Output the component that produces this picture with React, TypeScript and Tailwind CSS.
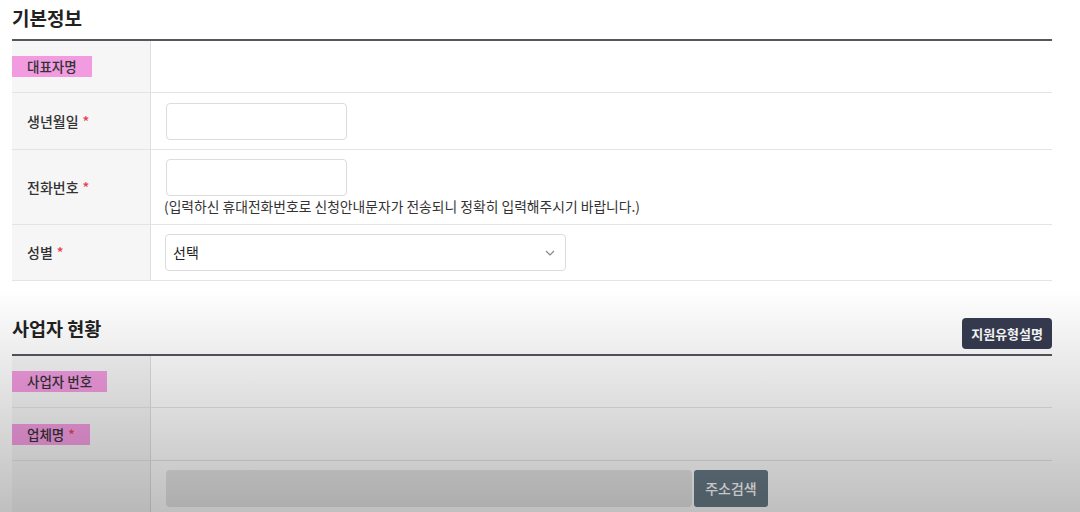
import React from "react";

const Star = () => <span className="ml-1 text-[#e8404a]">*</span>;

const Row = ({
  label,
  children,
  className = "",
}: {
  label: React.ReactNode;
  children?: React.ReactNode;
  className?: string;
}) => (
  <div className={`flex border-b border-[#e4e4e4] ${className}`}>
    <div className="flex w-[139px] shrink-0 items-center border-r border-[#dedede] bg-[#f6f6f6] text-[14px] font-medium text-[#333]">
      {label}
    </div>
    <div className="flex flex-1 flex-col justify-center pl-[14px]">{children}</div>
  </div>
);

const Pink = ({ children }: { children: React.ReactNode }) => (
  <span className="flex h-[21px] items-center bg-[#f29be0] pl-[15px] pr-[15px] text-[13.5px] font-medium text-[#333]">
    {children}
  </span>
);

const Plain = ({ children }: { children: React.ReactNode }) => (
  <span className="pl-[15px]">{children}</span>
);

export default function App() {
  return (
    <div
      className="relative h-[512px] w-[1080px] overflow-hidden bg-white"
      style={{ fontFamily: '"Noto Sans CJK KR", "Noto Sans", sans-serif' }}
    >
      <div className="ml-3 w-[1040px]">
        <h2 className="pt-[5px] text-[19px] font-bold leading-[26px] text-[#222]">기본정보</h2>
        <div className="mt-[8px] border-t-2 border-[#55575d]">
          <Row label={<Pink>대표자명</Pink>} className="h-[52px]" />
          <Row label={<Plain>생년월일<Star /></Plain>} className="h-[57px]">
            <div className="ml-[1px] h-[37px] w-[181px] rounded border border-[#dcdcdc] bg-white" />
          </Row>
          <Row label={<Plain>전화번호<Star /></Plain>} className="h-[75px]">
            <div className="ml-[1px] h-[37px] w-[181px] rounded border border-[#dcdcdc] bg-white" />
            <p className="mt-[1px] -ml-[1px] text-[13.8px] leading-[18px] text-[#333]">
              (입력하신 휴대전화번호로 신청안내문자가 전송되니 정확히 입력해주시기 바랍니다.)
            </p>
          </Row>
          <Row label={<Plain>성별<Star /></Plain>} className="h-[56px]">
            <div className="flex h-[37px] w-[401px] items-center justify-between rounded border border-[#dcdcdc] bg-white pl-[7px] pr-[10px] text-[14px] text-[#222]">
              <span>선택</span>
              <svg width="10" height="6" viewBox="0 0 10 6" fill="none">
                <path d="M1 1l4 4 4-4" stroke="#888" strokeWidth="1.2" />
              </svg>
            </div>
          </Row>
        </div>

        <div className="mt-[34px] flex items-end justify-between">
          <h2 className="mb-[13px] text-[18.5px] font-bold leading-[26px] text-[#222]">사업자 현황</h2>
          <button className="mb-[5px] h-[31px] rounded-[4px] bg-[#363b50] px-[9px] text-[13px] font-bold text-white">
            지원유형설명
          </button>
        </div>
        <div className="border-t-2 border-[#55575d]">
          <Row label={<Pink>사업자 번호</Pink>} className="h-[52px]" />
          <Row label={<Pink>업체명<Star /></Pink>} className="h-[53px]" />
          <Row label={null} className="h-[60px]">
            <div className="ml-[1px] flex gap-[2px] pb-[4px]">
              <div className="h-[37px] w-[526px] rounded bg-[#e6e6e6]" />
              <button className="h-[37px] w-[74px] rounded-[3px] bg-[#677a86] text-[14px] font-medium text-white">
                주소검색
              </button>
            </div>
          </Row>
        </div>
      </div>
      <div className="pointer-events-none absolute inset-x-0 top-[288px] bottom-0 bg-linear-to-b from-transparent to-black/25" />
    </div>
  );
}
